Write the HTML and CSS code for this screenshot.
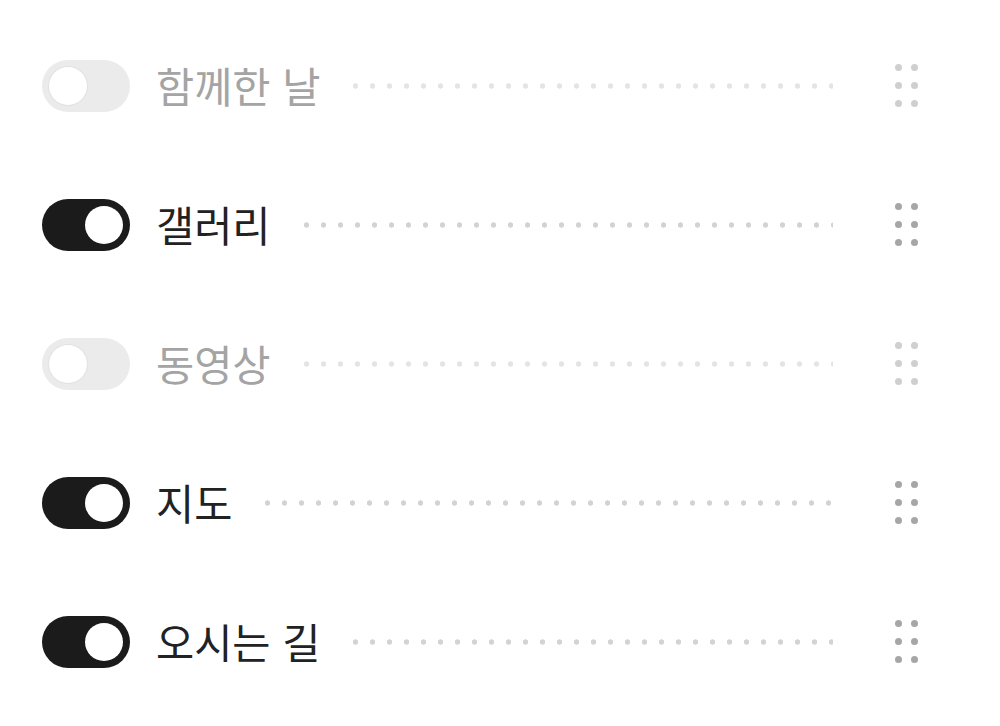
FILE: index.html
```html
<!DOCTYPE html>
<html lang="ko">
<head>
<meta charset="utf-8">
<link rel="stylesheet" href="styles.css">
</head>
<body>
<ul class="list">
  <li class="row off">
    <span class="toggle"><span class="knob"></span></span>
    <span class="label">함께한 날</span>
    <span class="leader"></span>
    <span class="handle"><i></i><i></i><i></i><i></i><i></i><i></i></span>
  </li>
  <li class="row on">
    <span class="toggle"><span class="knob"></span></span>
    <span class="label">갤러리</span>
    <span class="leader"></span>
    <span class="handle"><i></i><i></i><i></i><i></i><i></i><i></i></span>
  </li>
  <li class="row off">
    <span class="toggle"><span class="knob"></span></span>
    <span class="label">동영상</span>
    <span class="leader"></span>
    <span class="handle"><i></i><i></i><i></i><i></i><i></i><i></i></span>
  </li>
  <li class="row on">
    <span class="toggle"><span class="knob"></span></span>
    <span class="label">지도</span>
    <span class="leader"></span>
    <span class="handle"><i></i><i></i><i></i><i></i><i></i><i></i></span>
  </li>
  <li class="row on">
    <span class="toggle"><span class="knob"></span></span>
    <span class="label">오시는 길</span>
    <span class="leader"></span>
    <span class="handle"><i></i><i></i><i></i><i></i><i></i><i></i></span>
  </li>
</ul>
</body>
</html>
```
FILE: styles.css
```css
html, body {
  margin: 0;
  padding: 0;
  background: #fff;
}
body {
  font-family: "Noto Sans CJK KR", "Noto Sans", sans-serif;
}
.list {
  list-style: none;
  margin: 0;
  padding: 16px 80px 0 42px;
}
.row {
  height: 139px;
  display: flex;
  align-items: center;
}
.toggle {
  width: 88px;
  height: 52px;
  border-radius: 26px;
  box-sizing: border-box;
  padding: 7px;
  display: flex;
  align-items: center;
  flex: none;
}
.knob {
  width: 38px;
  height: 38px;
  border-radius: 50%;
  background: #fff;
}
.on .toggle {
  background: #1b1b1b;
  justify-content: flex-end;
}
.off .toggle {
  background: #ebebeb;
  justify-content: flex-start;
}
.off .knob {
  box-shadow: 0 0 0 1px #e2e2e2;
}
.label {
  margin-left: 26px;
  font-size: 41.5px;
  line-height: 1;
  letter-spacing: 0;
  flex: none;
}
.on .label { color: #222; }
.off .label { color: #a4a4a4; }
.leader {
  flex: 1;
  height: 6px;
  margin: 0 62px 0 27px;
  background-image: radial-gradient(circle, var(--dot) 2.4px, transparent 2.9px);
  background-size: 17px 6px;
  background-repeat: repeat-x;
  background-position: 0 0;
}
.on .leader { --dot: #d3d3d3; }
.off .leader { --dot: #e4e4e4; }
.handle {
  flex: none;
  display: grid;
  grid-template-columns: 7px 7px;
  grid-template-rows: 7px 7px 7px;
  column-gap: 9px;
  row-gap: 11px;
  margin-right: 2px;
}
.handle i {
  display: block;
  width: 7px;
  height: 7px;
  border-radius: 50%;
}
.on .handle i { background: #a6a6a6; }
.off .handle i { background: #cfcfcf; }
```
